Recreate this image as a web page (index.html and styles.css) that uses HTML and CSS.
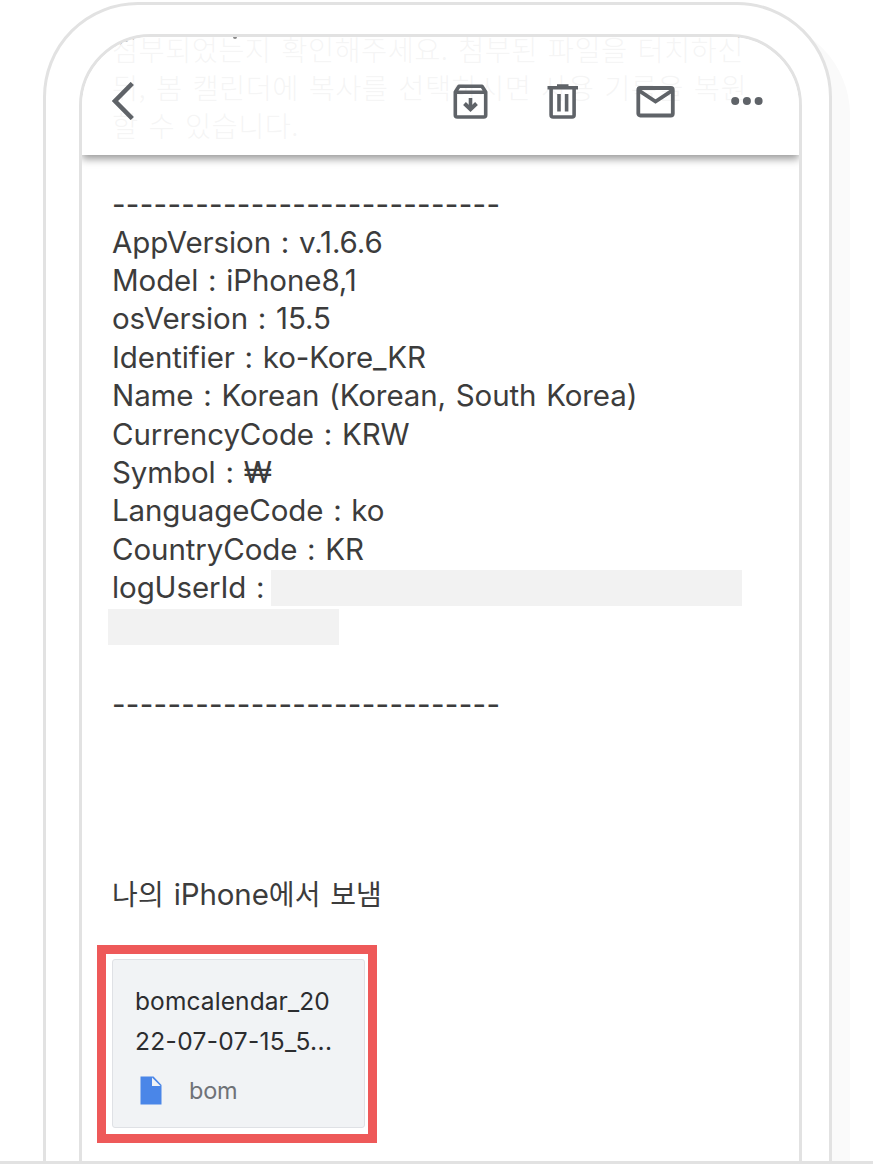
FILE: index.html
```html
<!DOCTYPE html>
<html lang="ko">
<head>
<meta charset="utf-8">
<title>Mail</title>
<link rel="stylesheet" href="styles.css">
</head>
<body>
<main class="stage">
  <div class="phone">
    <div class="screen">
      <header class="toolbar">
        <i class="tail"></i>
        <svg class="back" width="24" height="38" viewBox="0 0 24 38"><path d="M21.3 1.5 4 19l17.3 17.5" fill="none" stroke="#5f6368" stroke-width="4.6"/></svg>
        <svg class="archive" width="36" height="36" viewBox="0 0 36 36" fill="none" stroke="#5f6368" stroke-width="3.6"><path d="M2.3 8 6 2.3h23L32.7 8v23q0 2-2 2H4.300q-2 0-2-2zM2.300 8.200h30.400" stroke-linejoin="round"/><path d="M17.500 14v9"/><path d="M11.500 19.500l6 5.800 6-5.800" stroke-width="4"/></svg>
        <svg class="trash" width="32" height="36" viewBox="0 0 32 36" fill="none" stroke="#5f6368" stroke-width="3.600"><path d="M.5 3.800h30.500M10 2h11.500"/><path d="M4.100 4v27q0 2 2 2h19q2 0 2-2V4"/><path d="M12 10v17.500M19.600 10v17.500"/></svg>
        <svg class="mail" width="40" height="32" viewBox="0 0 40 32" fill="none" stroke="#5f6368" stroke-width="3.800"><rect x="2.300" y="2" width="34.500" height="27.500" rx="2"/><path d="M2.300 4.200 19.500 15.500 36.800 4.200"/></svg>
        <svg class="more" width="32" height="10" viewBox="0 0 32 10" fill="#5f6368"><circle cx="4.200" cy="5" r="4"/><circle cx="15.900" cy="5" r="4"/><circle cx="27.600" cy="5" r="4"/></svg>
      </header>
      <article class="message">
        <div class="line ko quoted">첨부되었는지 확인해주세요. 첨부된 파일을 터치하신</div>
        <div class="line ko quoted">뒤, 봄 캘린더에 복사를 선택하시면 사용 기록을 복원</div>
        <div class="line ko quoted">할 수 있습니다.</div>
        <div class="line"></div>
        <div class="line dashes">----------------------------</div>
        <div class="line">AppVersion : v.1.6.6</div>
        <div class="line">Model : iPhone8,1</div>
        <div class="line">osVersion : 15.5</div>
        <div class="line">Identifier : ko-Kore_KR</div>
        <div class="line">Name : Korean (Korean, South Korea)</div>
        <div class="line">CurrencyCode : KRW</div>
        <div class="line">Symbol : ₩</div>
        <div class="line">LanguageCode : ko</div>
        <div class="line">CountryCode : KR</div>
        <div class="line user"><span class="key">logUserId :</span><span class="mask"></span></div>
        <div class="line"><span class="mask short"></span></div>
        <div class="line"></div>
        <div class="line dashes closing">----------------------------</div>
        <div class="line"></div>
        <div class="line"></div>
        <div class="line"></div>
        <div class="line"></div>
        <div class="line sent"><span class="ko">나의</span> iPhone<span class="ko">에서 보냄</span></div>
        <div class="highlight">
          <div class="card">
            <div class="name">bomcalendar_20</div>
            <div class="name second">22-07-07-15_5...</div>
            <div class="type">
              <svg width="22" height="29" viewBox="0 0 22 29"><path d="M.5.500H13.500L21.500 9V28.500H.5z" fill="#4a86e8"/><path d="M12 1.500V10h8.500z" fill="#f1f3f5"/></svg>
              <span>bom</span>
            </div>
          </div>
        </div>
      </article>
    </div>
  </div>
</main>
</body>
</html>
```
FILE: styles.css
```css
* { box-sizing: border-box; }
body { margin: 0; background: #fff; }
.stage {
  width: 873px;
  height: 1164px;
  padding: 2px 0 0 43px;
  overflow: hidden;
  border-bottom: 3px solid #e2e2e2;
}
.phone {
  width: 789px;
  height: 1300px;
  padding: 29px 27px 0 33px;
  border: 3px solid #e2e2e2;
  border-radius: 95px;
  background: #fff;
  box-shadow: 18px 18px 0 #fafafa;
}
.screen {
  position: relative;
  width: 723px;
  height: 1250px;
  border: 3px solid #e2e2e2;
  border-radius: 72px;
  overflow: hidden;
}
.toolbar {
  position: absolute;
  z-index: 1;
  top: 0;
  left: 0;
  width: 100%;
  height: 118px;
  display: flex;
  align-items: center;
  padding: 10px 0 0 29px;
  background: rgba(255, 255, 255, .95);
  box-shadow: 0 4px 8px rgba(0, 0, 0, .4);
}
.toolbar svg { flex: none; }
.tail { position: absolute; top: 0; left: 151px; width: 4px; height: 2px; background: #8a8a8a; border-radius: 0 0 2px 2px; }
.archive { margin: 1px 0 0 318px; }
.trash { margin: 1px 0 0 58px; }
.mail { margin: 1px 0 0 57px; }
.more { margin-left: 55px; }
.message {
  margin-top: -6.4px;
  padding-left: 30px;
  font-family: Inter, "Noto Sans CJK KR", sans-serif;
  font-size: 29.5px;
  color: #3c3c3c;
}
.line {
  height: 38.4px;
  line-height: 38.4px;
  white-space: pre;
  letter-spacing: -.1px;
  word-spacing: 1.6px;
}
.dashes { letter-spacing: .3px; padding-top: 1px; }
.closing { padding: 0; line-height: 36.4px; }
.ko { font-family: "Noto Sans CJK KR", sans-serif; font-size: 28px; letter-spacing: .15px; }
.quoted { font-size: 28.500px; font-weight: 300; letter-spacing: .35px; line-height: 36px; }
.user { display: flex; align-items: center; }
.key { width: 153px; }
.mask { display: block; width: 471px; height: 36px; margin: 1px 0 0 6px; background: #f2f2f2; }
.short { width: 231px; margin: 3px 0 0 -4px; }
.sent { margin-top: -4px; }
.highlight {
  width: 280px;
  height: 198px;
  margin: 32.500px 0 0 -15px;
  border: 9px solid #ee5959;
  padding: 5px 0 0 6px;
}
.card {
  width: 253px;
  height: 169px;
  padding: 22px 0 0 22px;
  border: 1px solid #dfe1e5;
  border-radius: 3px;
  background: #f1f3f5;
  font-size: 24.500px;
  line-height: 39.500px;
  letter-spacing: .1px;
  color: #2c2d2f;
}
.name { height: 39.500px; white-space: nowrap; }
.second { letter-spacing: .35px; }
.type { display: flex; align-items: center; gap: 27px; padding: 10px 0 0 5px; font-size: 23.500px; letter-spacing: -.2px; color: #6f7277; }
```
